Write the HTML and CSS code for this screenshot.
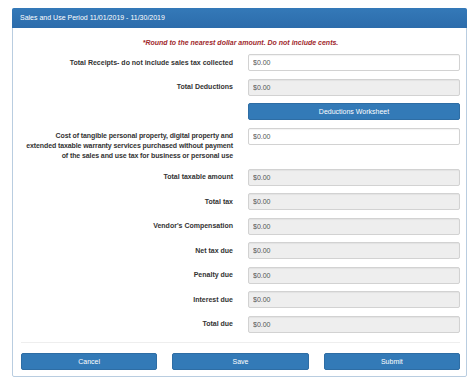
FILE: index.html
```html
<!DOCTYPE html>
<html lang="en">

<head>
  <meta charset="UTF-8" />
  <meta name="viewport" content="width=device-width, initial-scale=1.0" />
  <title>Sales and Use Tax Return</title>
  <link rel="stylesheet" href="styles.css">
</head>

<body>
  <div class="panel">
    <div class="panel-heading">Sales and Use Period 11/01/2019 - 11/30/2019</div>
    <form class="panel-body">
      <p class="note">*Round to the nearest dollar amount. Do not include cents.</p>

      <div class="form-group">
        <label for="receipts">Total Receipts- do not include sales tax collected</label>
        <input type="text" id="receipts" value="$0.00" />
      </div>
      <div class="form-group">
        <label for="deductions">Total Deductions</label>
        <input type="text" id="deductions" value="$0.00" readonly />
      </div>
      <div class="form-group">
        <span></span>
        <button type="button" class="btn">Deductions Worksheet</button>
      </div>
      <div class="form-group">
        <label for="cost" class="long">Cost of tangible personal property, digital property and<br>extended taxable warranty services purchased without payment of the sales and use tax for business or personal use</label>
        <input type="text" id="cost" value="$0.00" />
      </div>
      <div class="form-group">
        <label for="taxable">Total taxable amount</label>
        <input type="text" id="taxable" value="$0.00" readonly />
      </div>
      <div class="form-group">
        <label for="tax">Total tax</label>
        <input type="text" id="tax" value="$0.00" readonly />
      </div>
      <div class="form-group">
        <label for="vendor">Vendor's Compensation</label>
        <input type="text" id="vendor" value="$0.00" readonly />
      </div>
      <div class="form-group">
        <label for="net">Net tax due</label>
        <input type="text" id="net" value="$0.00" readonly />
      </div>
      <div class="form-group">
        <label for="penalty">Penalty due</label>
        <input type="text" id="penalty" value="$0.00" readonly />
      </div>
      <div class="form-group">
        <label for="interest">Interest due</label>
        <input type="text" id="interest" value="$0.00" readonly />
      </div>
      <div class="form-group">
        <label for="total">Total due</label>
        <input type="text" id="total" value="$0.00" readonly />
      </div>

      <div class="actions">
        <button type="button" class="btn">Cancel</button>
        <button type="button" class="btn">Save</button>
        <button type="submit" class="btn">Submit</button>
      </div>
    </form>
  </div>
</body>

</html>
```
FILE: styles.css
```css
body {
  font-family: 'Liberation Sans', Arial, sans-serif;
  font-size: 7px;
  color: #333;
  background: #fff;
  margin: 0;
  padding: 8px 7px 0 12px;
}

.panel {
  width: 453px;
  border: 1px solid #b9cde0;
  border-radius: 2px;
  background: #fff;
}

.panel-heading {
  height: 20px;
  line-height: 20px;
  padding: 0 8px;
  color: #fff;
  background: linear-gradient(#3479b8, #2c6cab);
  margin: -1px -1px 0;
  border-radius: 2px 2px 0 0;
}

.panel-body {
  padding: 10px 6px 6px 8px;
}

.note {
  margin: 0 0 6px;
  line-height: 10px;
  text-align: center;
  color: #a0282c;
  font-weight: bold;
  font-style: italic;
}

.form-group {
  display: grid;
  grid-template-columns: 212px 212px;
  column-gap: 15px;
  margin-bottom: 7.5px;
}

label {
  text-align: right;
  font-weight: bold;
  line-height: 10px;
  padding-top: 3.5px;
}

label.long {
  letter-spacing: -0.1px;
  margin-left: -2px;
}

input[type="text"] {
  box-sizing: border-box;
  height: 17px;
  width: 100%;
  margin: 0;
  padding: 0 4px;
  border: 1px solid #d2d2d2;
  border-radius: 2px;
  font-family: inherit;
  font-size: 7px;
  color: #555;
  background: #fff;
  box-shadow: inset 0 1px 1px rgba(0, 0, 0, 0.05);
}

input[readonly] {
  background: #eee;
}

.btn {
  height: 17px;
  padding: 0;
  border: 1px solid #2e6da4;
  border-radius: 2px;
  background: #337ab7;
  color: #fff;
  font-family: inherit;
  font-size: 7px;
  cursor: pointer;
}

.actions {
  display: grid;
  grid-template-columns: repeat(3, 1fr);
  column-gap: 15px;
  border-top: 1px solid #eee;
  margin-top: 9.5px;
  padding-top: 10px;
}
```
